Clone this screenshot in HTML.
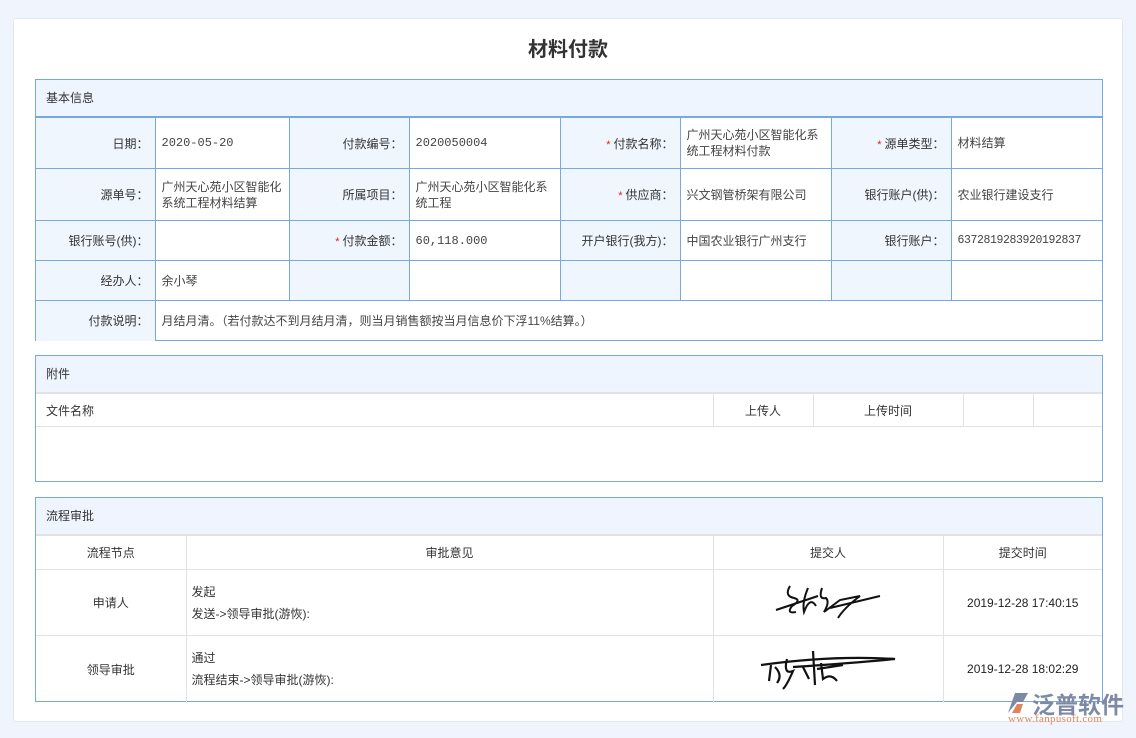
<!DOCTYPE html>
<html><head><meta charset="utf-8"><style>
*{margin:0;padding:0;box-sizing:border-box}
body{width:1136px;height:738px;background:#f0f5fd;font-family:"Liberation Sans","Noto Sans CJK SC",sans-serif;font-size:12px;color:#333;position:relative;overflow:hidden}
.card{position:absolute;left:13px;top:18px;width:1110px;height:704px;background:#fff;border:1px solid #e3e8ef;border-radius:3px}
h1{position:absolute;left:0;top:33px;width:1136px;text-align:center;font-size:20px;font-weight:bold;color:#333;font-family:"Liberation Sans","Noto Sans CJK SC",sans-serif}
.box{position:absolute;left:35px;width:1068px;border:1px solid #76aadf}
.hd{height:37px;line-height:36px;background:#eff5fe;padding-left:10px;font-size:12px;color:#333}
table{border-collapse:collapse;table-layout:fixed;width:1066px}
td{font-size:12px}
.t1 td{border:1px solid #76aadf;vertical-align:middle;padding:0 6px}
.t1 tr td:first-child{border-left:none}.t1 tr td:last-child{border-right:none}.t1 tr:last-child td{border-bottom:none}
.t1 td.l{background:#eff6fe;text-align:right;padding:0 6px 0 0;color:#333}
.t1 td.v{color:#444;line-height:16px}
.m{font-family:"Liberation Mono",monospace;font-size:12px}
.s{color:#e02020;margin-right:3px;font-size:11px}
.t2 td{border:1px solid #e2e2e2;padding:0 10px}
.t2 tr td:first-child{border-left:none}.t2 tr td:last-child{border-right:none}.t2 tr:last-child td{border-bottom:none}
.c{text-align:center}
</style></head><body>
<div class="card"></div>
<h1>材料付款</h1>
<div class="box" style="top:79px;height:262px">
<div class="hd" style="border-bottom:1px solid #76aadf">基本信息</div>
<table class="t1">
<colgroup><col style="width:119px"><col style="width:134px"><col style="width:120px"><col style="width:151px"><col style="width:120px"><col style="width:151px"><col style="width:120px"><col style="width:151px"></colgroup>
<tr style="height:51px"><td class="l">日期：</td><td class="v m">2020-05-20</td><td class="l">付款编号：</td><td class="v m">2020050004</td><td class="l"><span class="s">*</span>付款名称：</td><td class="v">广州天心苑小区智能化系统工程材料付款</td><td class="l"><span class="s">*</span>源单类型：</td><td class="v">材料结算</td></tr>
<tr style="height:52px"><td class="l">源单号：</td><td class="v">广州天心苑小区智能化系统工程材料结算</td><td class="l">所属项目：</td><td class="v">广州天心苑小区智能化系统工程</td><td class="l"><span class="s">*</span>供应商：</td><td class="v">兴文钢管桥架有限公司</td><td class="l">银行账户(供)：</td><td class="v">农业银行建设支行</td></tr>
<tr style="height:40px"><td class="l">银行账号(供)：</td><td class="v"></td><td class="l"><span class="s">*</span>付款金额：</td><td class="v m">60,118.000</td><td class="l">开户银行(我方)：</td><td class="v">中国农业银行广州支行</td><td class="l">银行账户：</td><td class="v m" style="font-size:11.5px;letter-spacing:-0.4px">6372819283920192837</td></tr>
<tr style="height:40px"><td class="l">经办人：</td><td class="v">余小琴</td><td class="l"></td><td></td><td class="l"></td><td></td><td class="l"></td><td></td></tr>
<tr style="height:40px"><td class="l">付款说明：</td><td class="v" colspan="7">月结月清。（若付款达不到月结月清，则当月销售额按当月信息价下浮11%结算。）</td></tr>
</table></div>

<div class="box" style="top:355px;height:127px">
<div class="hd" style="border-bottom:1px solid #e2e2e2">附件</div>
<table class="t2">
<colgroup><col style="width:677px"><col style="width:100px"><col style="width:150px"><col style="width:70px"><col style="width:69px"></colgroup>
<tr style="height:33px"><td>文件名称</td><td class="c">上传人</td><td class="c">上传时间</td><td></td><td></td></tr>
<tr style="height:55px"><td colspan="5" style="border-bottom:none"></td></tr>
</table></div>

<div class="box" style="top:497px;height:205px">
<div class="hd" style="border-bottom:1px solid #e2e2e2">流程审批</div>
<table class="t2">
<colgroup><col style="width:150px"><col style="width:527px"><col style="width:230px"><col style="width:159px"></colgroup>
<tr style="height:34px"><td class="c">流程节点</td><td class="c">审批意见</td><td class="c">提交人</td><td class="c">提交时间</td></tr>
<tr style="height:66px"><td class="c">申请人</td><td style="line-height:22px;padding-left:5px">发起<br>发送->领导审批(游恢):</td><td class="c"><svg width="120" height="50" viewBox="0 0 120 50"><g fill="none" stroke="#111" stroke-width="2"><path d="M8 34 L50 20 M22 10 Q16 20 26 22 Q34 24 24 30 Q18 38 28 36 M40 12 Q34 26 36 36 Q42 20 48 30 M54 12 Q50 24 58 22 Q62 26 56 36 Q64 30 72 24 L92 20 Q76 32 70 42 M62 32 L112 20"/></g></svg></td><td class="c" style="font-size:12px;color:#222">2019-12-28 17:40:15</td></tr>
<tr style="height:67px"><td class="c">领导审批</td><td style="line-height:22px;padding-left:5px">通过<br>流程结束->领导审批(游恢):</td><td class="c"><svg width="150" height="50" viewBox="0 0 150 50"><g fill="none" stroke="#111" stroke-width="2.2"><path d="M8 22 Q80 12 142 16 Q100 20 40 24 M18 22 L16 38 M22 24 Q30 32 24 40 M34 16 Q30 32 40 28 Q34 42 30 46 M50 24 L56 36 M60 8 L62 42 M68 20 L70 36 Q78 30 84 38 M64 26 L90 22"/></g></svg></td><td class="c" style="font-size:12px;color:#222">2019-12-28 18:02:29</td></tr>
</table></div>

<div style="position:absolute;left:1006px;top:691px;width:24px;height:24px">
<svg width="24" height="24" viewBox="0 0 24 24"><path d="M2 22 L9 2 L22 2 L17 11 L11 11 Z" fill="#7d8aa6"/><path d="M11 13 L17 13 L14 22 L6 22 Z" fill="#e0855a"/></svg></div>
<div style="position:absolute;left:1032px;top:686px;font-size:23px;font-weight:bold;color:#7d8aa6;letter-spacing:0">泛普软件</div>
<div style="position:absolute;left:1008px;top:713px;font-size:11px;color:#e0855a;font-family:'Liberation Serif',serif;letter-spacing:0.3px">www.fanpusoft.com</div>
</body></html>
